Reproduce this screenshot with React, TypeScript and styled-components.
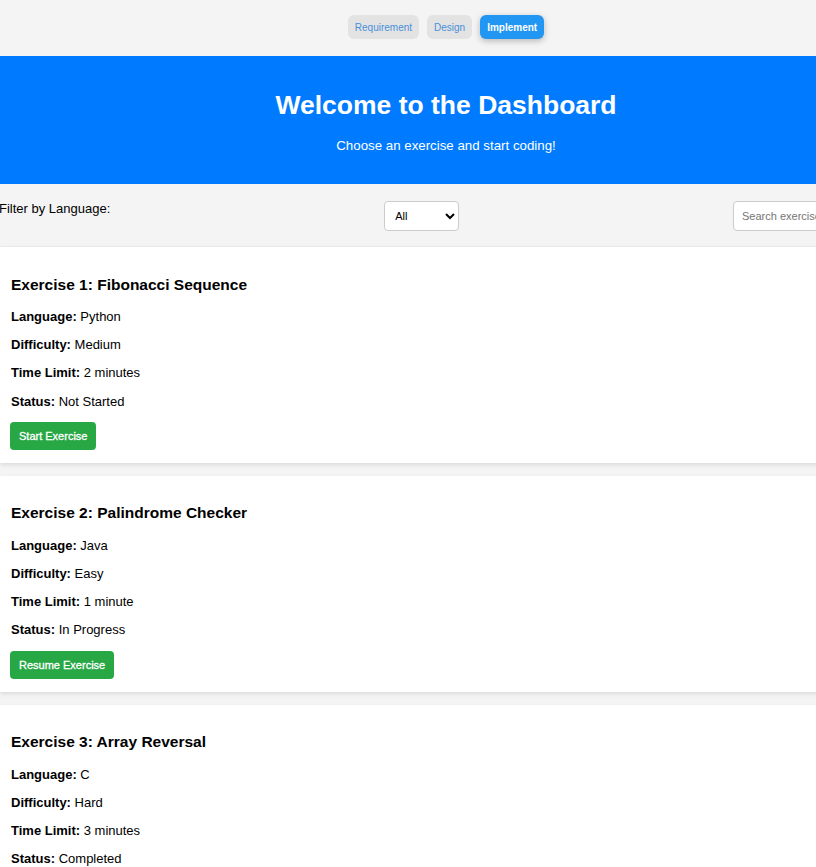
import React from "react";
import styled, { createGlobalStyle } from "styled-components";

const GlobalStyle = createGlobalStyle`
  html, body {
    margin: 0;
    padding: 0;
    background: #f4f4f4;
    font-family: "Liberation Sans", Arial, sans-serif;
    color: #000;
  }
`;

const Page = styled.div`
  width: 892px;
`;

const TopNav = styled.nav`
  display: flex;
  justify-content: center;
  gap: 8px;
  padding: 15px 0 17px;
`;

const NavButton = styled.button<{ $active?: boolean }>`
  font-family: "Liberation Sans", Arial, sans-serif;
  font-size: 10px;
  height: 24px;
  padding: 0 7px;
  border: none;
  border-radius: 6px;
  cursor: pointer;
  background: ${(p) => (p.$active ? "#2196f3" : "#e3e3e3")};
  color: ${(p) => (p.$active ? "#fff" : "#4a90d9")};
  font-weight: ${(p) => (p.$active ? 700 : 400)};
  box-shadow: ${(p) => (p.$active ? "0 2px 6px rgba(0,0,0,0.25)" : "none")};
`;

const Header = styled.header`
  background: #007bff;
  color: #fff;
  text-align: center;
  padding: 33px 0 30px;
`;

const Title = styled.h1`
  margin: 0;
  font-size: 26.5px;
  font-weight: 700;
  line-height: 32px;
`;

const Subtitle = styled.p`
  margin: 17px 0 0;
  font-size: 13.3px;
  line-height: 16px;
`;

const FilterBar = styled.div`
  display: flex;
  justify-content: space-between;
  align-items: flex-start;
  padding: 17px 0 15px;
  border-bottom: 1px solid #ebebeb;
`;

const FilterLabel = styled.label`
  font-size: 13px;
  line-height: 15px;
  margin-top: 0;
  margin-left: -1px;
`;

const Select = styled.select`
  width: 75px;
  height: 30px;
  padding: 0 6px;
  font-family: "Liberation Sans", Arial, sans-serif;
  font-size: 11px;
  border: 1px solid #ccc;
  border-radius: 4px;
  background: #fff;
  color: #000;
`;

const Search = styled.input`
  width: 159px;
  height: 30px;
  box-sizing: border-box;
  padding: 0 8px;
  font-family: "Liberation Sans", Arial, sans-serif;
  font-size: 11px;
  border: 1px solid #ccc;
  border-radius: 4px;
  background: #fff;
  &::placeholder {
    color: #757575;
  }
`;

const CardList = styled.div`
  display: flex;
  flex-direction: column;
  gap: 13px;
`;

const Card = styled.section`
  background: #fff;
  padding: 10px 10px 13px;
  box-shadow: 0 2px 4px rgba(0, 0, 0, 0.1);
`;

const CardTitle = styled.h3`
  margin: 17.5px 0 15.5px 1px;
  font-size: 15.5px;
  line-height: 19px;
  font-weight: 700;
`;

const Field = styled.p`
  margin: 0 0 13.2px 1px;
  font-size: 13px;
  line-height: 15px;
`;

const ActionButton = styled.button`
  display: block;
  height: 28px;
  padding: 0 9px;
  border: none;
  border-radius: 4px;
  background: #28a745;
  color: #fff;
  font-family: "Liberation Sans", Arial, sans-serif;
  font-size: 11px;
  font-weight: 400;
  -webkit-text-stroke: 0.3px #fff;
  cursor: pointer;
`;

const exercises = [
  {
    title: "Exercise 1: Fibonacci Sequence",
    language: "Python",
    difficulty: "Medium",
    time: "2 minutes",
    status: "Not Started",
    action: "Start Exercise",
  },
  {
    title: "Exercise 2: Palindrome Checker",
    language: "Java",
    difficulty: "Easy",
    time: "1 minute",
    status: "In Progress",
    action: "Resume Exercise",
  },
  {
    title: "Exercise 3: Array Reversal",
    language: "C",
    difficulty: "Hard",
    time: "3 minutes",
    status: "Completed",
    action: "Review Exercise",
  },
];

export default function App() {
  return (
    <Page>
      <GlobalStyle />
      <TopNav>
        <NavButton>Requirement</NavButton>
        <NavButton>Design</NavButton>
        <NavButton $active>Implement</NavButton>
      </TopNav>
      <Header>
        <Title>Welcome to the Dashboard</Title>
        <Subtitle>Choose an exercise and start coding!</Subtitle>
      </Header>
      <FilterBar>
        <FilterLabel>Filter by Language:</FilterLabel>
        <Select defaultValue="All">
          <option>All</option>
          <option>Python</option>
          <option>Java</option>
          <option>C</option>
        </Select>
        <Search placeholder="Search exercises..." />
      </FilterBar>
      <CardList>
        {exercises.map((e) => (
          <Card key={e.title}>
            <CardTitle>{e.title}</CardTitle>
            <Field>
              <strong>Language:</strong> {e.language}
            </Field>
            <Field>
              <strong>Difficulty:</strong> {e.difficulty}
            </Field>
            <Field>
              <strong>Time Limit:</strong> {e.time}
            </Field>
            <Field>
              <strong>Status:</strong> {e.status}
            </Field>
            <ActionButton>{e.action}</ActionButton>
          </Card>
        ))}
      </CardList>
    </Page>
  );
}
